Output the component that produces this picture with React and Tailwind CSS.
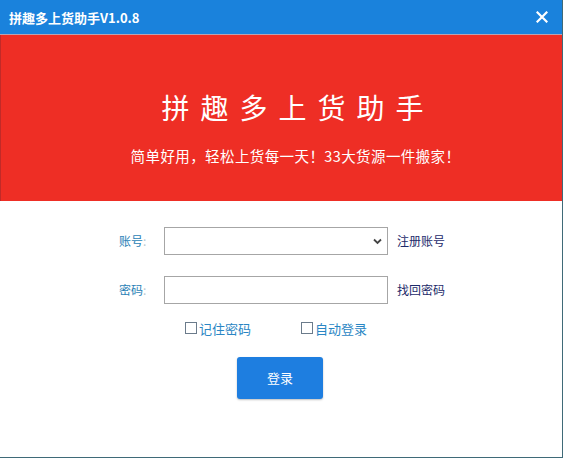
import React from "react";

const font = { fontFamily: '"Noto Sans CJK SC", "Microsoft YaHei", sans-serif' };

function Checkbox({ label }) {
  return (
    <div className="flex items-center">
      <div className="w-[12px] h-[12px] border border-[#6b7b8b] bg-white mr-[2px]" />
      <span className="text-[13px] text-[#2a86c4] leading-none">{label}</span>
    </div>
  );
}

export default function App() {
  return (
    <div className="w-[567px] h-[460px] bg-white" style={font}>
      <div className="w-[563px] h-[458px] border-r border-b border-[#3f6a78] flex flex-col bg-white">
        <div className="h-[34px] bg-[#1a82dc] flex items-center justify-between pl-[9px] pr-[14px]">
          <span className="text-white font-bold text-[13px] leading-none">拼趣多上货助手V1.0.8</span>
          <svg width="12" height="12" viewBox="0 0 12 12">
            <path d="M1.5 1.5 L10.5 10.5 M10.5 1.5 L1.5 10.5" stroke="#fff" strokeWidth="2.2" strokeLinecap="square" />
          </svg>
        </div>
        <div className="h-px bg-[#b9a2b2]" />
        <div className="h-[166px] bg-[#ee2e25] flex flex-col items-center pt-[55px] pl-[22px] border-l border-[#c22a28]">
          <div className="text-white text-[28px] leading-[34px] tracking-[11px] pl-[11px] font-normal">拼趣多上货助手</div>
          <div className="text-white text-[14.5px] leading-[20px] mt-[22px] tracking-[0.4px] pl-[6px]">简单好用，轻松上货每一天！33大货源一件搬家！</div>
        </div>
        <div className="flex flex-col pt-[26px]">
          <div className="flex items-center h-[28px]">
            <span className="ml-[119px] w-[45px] text-[12px] text-[#2a7fb6]">账号<span className="text-[#b8c8d0]">:</span></span>
            <div className="w-[224px] h-[28px] border border-[#a6a6a6] bg-white flex items-center justify-end pr-[5px]">
              <svg width="9" height="7" viewBox="0 0 9 7">
                <path d="M1 1.5 L4.5 5 L8 1.5" stroke="#444" strokeWidth="1.8" fill="none" />
              </svg>
            </div>
            <span className="ml-[9px] text-[12px] text-[#1c2a6a]">注册账号</span>
          </div>
          <div className="flex items-center h-[28px] mt-[21px]">
            <span className="ml-[119px] w-[45px] text-[12px] text-[#2a7fb6]">密码<span className="text-[#b8c8d0]">:</span></span>
            <div className="w-[224px] h-[28px] border border-[#a6a6a6] bg-white" />
            <span className="ml-[9px] text-[12px] text-[#1c2a6a]">找回密码</span>
          </div>
          <div className="flex items-center h-[18px] mt-[15px]">
            <div className="ml-[185px]"><Checkbox label="记住密码" /></div>
            <div className="ml-[50px]"><Checkbox label="自动登录" /></div>
          </div>
          <div className="flex mt-[20px]">
            <button className="ml-[237px] w-[86px] h-[42px] bg-[#1e7ee0] rounded-[3px] text-white text-[13px] shadow-[0_1px_2px_rgba(0,0,0,0.25)]">登录</button>
          </div>
        </div>
      </div>
    </div>
  );
}
